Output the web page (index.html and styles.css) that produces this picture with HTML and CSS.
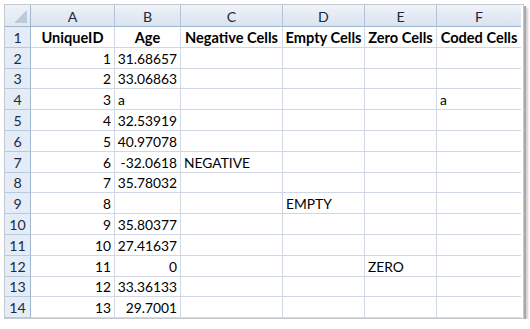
FILE: index.html
```html
<!DOCTYPE html>
<html>
<head>
<meta charset="utf-8">
<link rel="stylesheet" href="styles.css">
</head>
<body>
<div class="frame">
  <div class="sheet">
    <div class="corner"><span class="tri"></span></div>
    <div class="ch">A</div><div class="ch">B</div><div class="ch">C</div><div class="ch">D</div><div class="ch">E</div><div class="ch last">F</div>

    <div class="rh">1</div><div class="c b">UniqueID</div><div class="c b">Age</div><div class="c b">Negative Cells</div><div class="c b">Empty Cells</div><div class="c b">Zero Cells</div><div class="c b">Coded Cells</div>
    <div class="rh">2</div><div class="c n">1</div><div class="c n">31.68657</div><div class="c"></div><div class="c"></div><div class="c"></div><div class="c"></div>
    <div class="rh">3</div><div class="c n">2</div><div class="c n">33.06863</div><div class="c"></div><div class="c"></div><div class="c"></div><div class="c"></div>
    <div class="rh">4</div><div class="c n">3</div><div class="c">a</div><div class="c"></div><div class="c"></div><div class="c"></div><div class="c">a</div>
    <div class="rh">5</div><div class="c n">4</div><div class="c n">32.53919</div><div class="c"></div><div class="c"></div><div class="c"></div><div class="c"></div>
    <div class="rh">6</div><div class="c n">5</div><div class="c n">40.97078</div><div class="c"></div><div class="c"></div><div class="c"></div><div class="c"></div>
    <div class="rh">7</div><div class="c n">6</div><div class="c n">-32.0618</div><div class="c">NEGATIVE</div><div class="c"></div><div class="c"></div><div class="c"></div>
    <div class="rh">8</div><div class="c n">7</div><div class="c n">35.78032</div><div class="c"></div><div class="c"></div><div class="c"></div><div class="c"></div>
    <div class="rh">9</div><div class="c n">8</div><div class="c"></div><div class="c"></div><div class="c">EMPTY</div><div class="c"></div><div class="c"></div>
    <div class="rh">10</div><div class="c n">9</div><div class="c n">35.80377</div><div class="c"></div><div class="c"></div><div class="c"></div><div class="c"></div>
    <div class="rh">11</div><div class="c n">10</div><div class="c n">27.41637</div><div class="c"></div><div class="c"></div><div class="c"></div><div class="c"></div>
    <div class="rh">12</div><div class="c n">11</div><div class="c n">0</div><div class="c"></div><div class="c"></div><div class="c">ZERO</div><div class="c"></div>
    <div class="rh">13</div><div class="c n">12</div><div class="c n">33.36133</div><div class="c"></div><div class="c"></div><div class="c"></div><div class="c"></div>
    <div class="rh">14</div><div class="c n">13</div><div class="c n">29.7001</div><div class="c"></div><div class="c"></div><div class="c"></div><div class="c"></div>
  </div>
</div>
</body>
</html>
```
FILE: styles.css
```css
html, body {
  margin: 0;
  padding: 0;
  background: #ffffff;
}
body {
  font-family: Lato, "Liberation Sans", sans-serif;
  font-size: 13.8px;
  color: #000;
}
.frame {
  margin: 4px 0 0 4px;
  width: 518px;
  border: 1px solid #c5c9cf;
  box-shadow: 2px 2px 0 #a9a9a9, 4px 4px 2px #cfcfcf;
  background: #fff;
}
.sheet {
  display: grid;
  grid-template-columns: 26px 84px 66px 102px 82px 72px 84px;
  grid-template-rows: 22px repeat(14, 20.8px);
}
.corner {
  position: relative;
  background: linear-gradient(#eef3f9, #dfe7f1);
  border-right: 1px solid #9eb6ce;
  border-bottom: 1px solid #9eb6ce;
}
.tri {
  position: absolute;
  right: 3px;
  bottom: 3px;
  width: 0;
  height: 0;
  border-left: 13px solid transparent;
  border-bottom: 13px solid #bccada;
}
.ch {
  background: linear-gradient(#f0f4f9 0%, #e4ebf4 45%, #d9e3ef 100%);
  border-right: 1px solid #b2c3d8;
  border-bottom: 1px solid #9eb6ce;
  display: flex;
  align-items: center;
  justify-content: center;
  color: #1b2a41;
  padding-top: 2px;
  font-size: 14.2px;
}
.ch.last {
  border-right: none;
}
.rh {
  background: #e4ecf7;
  border-right: 1px solid #9eb6ce;
  border-bottom: 1px solid #b9c9dc;
  display: flex;
  align-items: flex-end;
  justify-content: center;
  color: #1b2a41;
  padding-bottom: 1px;
  font-size: 14.2px;
}
.c {
  border-right: 1px solid #d0d7e5;
  border-bottom: 1px solid #d0d7e5;
  display: flex;
  align-items: flex-end;
  padding: 0 3px 1px 3px;
  white-space: nowrap;
  overflow: hidden;
}
.c:nth-child(7n) {
  border-right: none;
}
.c.n {
  justify-content: flex-end;
}
.c.b {
  font-weight: bold;
  font-size: 14.6px;
  justify-content: center;
  padding-left: 0;
  padding-right: 0;
}
```
